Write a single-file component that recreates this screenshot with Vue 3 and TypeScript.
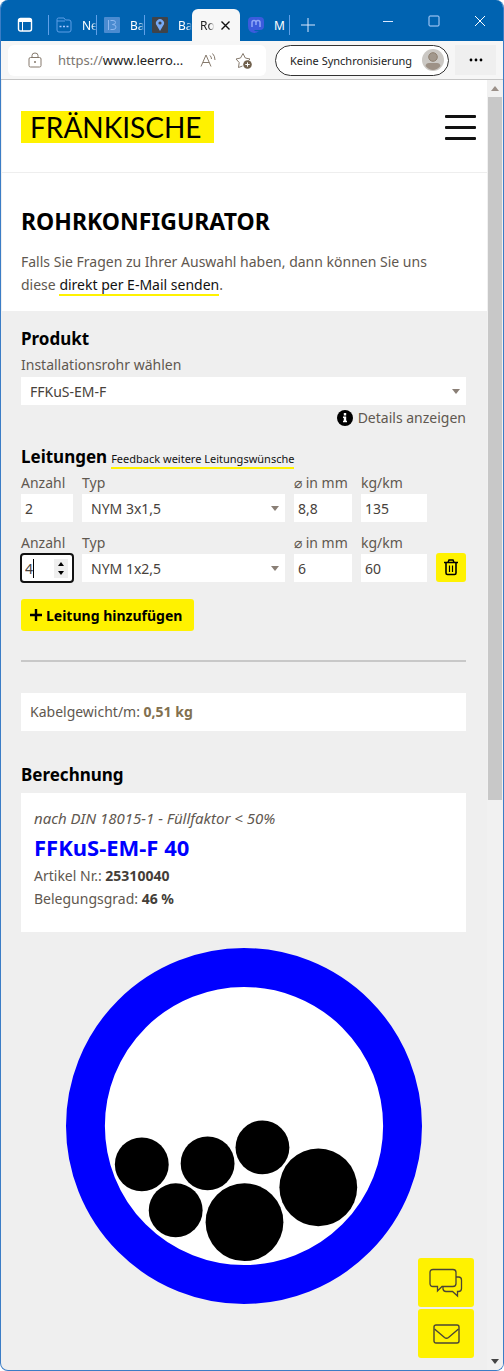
<script setup lang="ts">
import { ref, computed } from 'vue'

interface Cable {
  id: number
  count: number
  type: string
  diameter: string
  weight: string
  active: boolean
}

interface Circle {
  x: number
  y: number
  r: number
}

const product = ref('FFKuS-EM-F')
const products = ['FFKuS-EM-F', 'FFKuS-EM-FF', 'FBY-EL-F']
const cableTypes = ['NYM 3x1,5', 'NYM 1x2,5', 'NYM 5x1,5']

const cables = ref<Cable[]>([
  { id: 1, count: 2, type: 'NYM 3x1,5', diameter: '8,8', weight: '135', active: false },
  { id: 2, count: 4, type: 'NYM 1x2,5', diameter: '6', weight: '60', active: true },
])

const circles: Circle[] = [
  { x: 76, y: 217, r: 27 },
  { x: 142, y: 216, r: 27 },
  { x: 197, y: 200, r: 27 },
  { x: 110, y: 263, r: 27 },
  { x: 179, y: 275, r: 39 },
  { x: 253, y: 240, r: 39 },
]

const totalWeight = computed(() => {
  const grams = cables.value.reduce((sum, c) => sum + c.count * Number(c.weight), 0)
  return (grams / 1000).toFixed(2).replace('.', ',')
})

function addCable() {
  const id = Math.max(0, ...cables.value.map((c) => c.id)) + 1
  cables.value.push({ id, count: 1, type: 'NYM 3x1,5', diameter: '8,8', weight: '135', active: false })
}

function removeCable(id: number) {
  cables.value = cables.value.filter((c) => c.id !== id)
}

function step(cable: Cable, by: number) {
  cable.count = Math.max(0, cable.count + by)
}
</script>

<template>
  <div class="window">
    <header class="titlebar">
      <button class="workspace" aria-label="Tabaktionen">
        <svg width="16" height="16" viewBox="0 0 16 16" fill="none" stroke="#fff">
          <rect x="1.5" y="1.5" width="13" height="12.500" rx="2" stroke-width="1.4" />
          <path d="M1.500 3.500H14.500" stroke-width="3" />
          <path d="M5.500 4V14" />
        </svg>
      </button>
      <nav class="tabs" aria-label="Tabs">
        <button class="tab">
          <svg width="16" height="16" viewBox="0 0 16 16" fill="none" stroke="#5d9fe6">
            <path d="M1 4V2.500Q1 1 2.500 1H8L9.500 3H13Q15 3 15 5V13Q15 15 13 15H3Q1 15 1 13V4H9" />
            <path d="M3.500 9.500H12.500" stroke="#a8c8ff" stroke-width="1.5" stroke-dasharray="2 1.500" />
          </svg>
          <span class="fade">Ne</span>
        </button>
        <button class="tab">
          <svg width="16" height="16" viewBox="0 0 16 16" fill="none">
            <rect width="16" height="16" rx="1" fill="#4a8bd0" />
            <path d="M4.500 3V13M6.500 3.500H9Q11.500 3.500 11.500 5.500T8.500 7.500Q12 7.500 12 10T9 12.500H6.500" stroke="#8db8ef" />
          </svg>
          <span class="fade">Ba</span>
        </button>
        <button class="tab">
          <svg width="16" height="16" viewBox="0 0 16 16">
            <rect width="16" height="16" rx="1" fill="#404348" />
            <path d="M8 14L4.800 8.500A4 4 0 1 1 11.200 8.500Z" fill="#77a9f5" />
            <circle cx="8" cy="6" r="1.600" fill="#404348" />
          </svg>
          <span class="fade">Ba</span>
        </button>
        <button class="tab current" aria-current="page">
          <span class="fade">Ro</span>
          <svg width="9" height="9" viewBox="0 0 9 9" stroke="#111" stroke-width="1.400"><path d="M.5.500L8.500 8.500M8.500.500L.500 8.500" /></svg>
        </button>
        <button class="tab">
          <svg width="16" height="16" viewBox="0 0 16 16" fill="none">
            <path d="M0 4Q0 0 4 0H12Q16 0 16 4V9Q16 13 12 13H6Q7 15 11 14Q9 16 6 16Q0 15 0 9Z" fill="#3b5bdc" />
            <path d="M4 10V5.500Q4 3.500 6 3.500T8 5.500V8V5.500Q8 3.500 10 3.500T12 5.500V10" stroke="#8fa6f7" stroke-width="1.500" />
          </svg>
          <span>M</span>
        </button>
      </nav>
      <button class="new-tab" aria-label="Neuer Tab">
        <svg width="14" height="14" viewBox="0 0 14 14" stroke="#dbe9ff"><path d="M7 0V14M0 7H14" /></svg>
      </button>
      <div class="win-controls">
        <button aria-label="Minimieren">
          <svg width="12" height="12" viewBox="0 0 12 12" stroke="#dbe9ff"><path d="M1 6.500H11" /></svg>
        </button>
        <button aria-label="Maximieren">
          <svg width="12" height="12" viewBox="0 0 12 12" fill="none" stroke="#b9d6ff"><rect x="1" y="1" width="10" height="10" rx="1" /></svg>
        </button>
        <button aria-label="Schließen">
          <svg width="12" height="12" viewBox="0 0 12 12" stroke="#fff"><path d="M1 1L11 11M11 1L1 11" /></svg>
        </button>
      </div>
    </header>

    <div class="toolbar">
      <div class="address">
        <svg class="lock" width="14" height="16" viewBox="0 0 14 16" fill="none" stroke="#85796c">
          <rect x="1" y="5.500" width="12" height="9.500" rx="1.500" />
          <path d="M4 5.500V3.500Q4 1 7 1T10 3.500V5.500" />
          <circle cx="7" cy="10" r="1" fill="#85796c" stroke="none" />
        </svg>
        <span class="url">https://<b>www.leerro...</b></span>
        <button class="read" aria-label="Laut vorlesen">
          <svg width="17" height="15" viewBox="0 0 17 15" fill="none" stroke="#85796c">
            <path d="M1 13.500L6 2L11 13.500M2.800 9.500H9.200" />
            <path d="M10 2.500Q11.500 4 11.500 6M12.500 .500Q15 3 15 7" />
          </svg>
        </button>
        <button class="favorite" aria-label="Zu Favoriten hinzufügen">
          <svg width="17" height="17" viewBox="0 0 17 17" fill="none" stroke="#85796c">
            <path d="M7.500 14L3.500 15.500L4.200 10.500L1 7L5.500 6L8 1.500L10.300 6L15 7L13.500 8.500" />
            <circle cx="12.500" cy="12.500" r="4.300" fill="#71614d" stroke="none" />
            <path d="M12.500 10.300V14.700M10.300 12.500H14.700" stroke="#fff" />
          </svg>
        </button>
      </div>
      <button class="profile">
        <span>Keine Synchronisierung</span>
        <svg width="22" height="22" viewBox="0 0 22 22">
          <circle cx="11" cy="11" r="11" fill="#cbc8c4" />
          <circle cx="11" cy="8" r="4.300" fill="#a2988d" stroke="#8e8071" />
          <path d="M3.500 17Q4 14 7 14H15Q18 14 18.500 17Q15 21 11 21T3.500 17Z" fill="#9d9186" />
        </svg>
      </button>
      <button class="more" aria-label="Einstellungen und mehr">
        <svg width="14" height="4" viewBox="0 0 14 4"><circle cx="2" cy="2" r="1.400" /><circle cx="7" cy="2" r="1.400" /><circle cx="12" cy="2" r="1.400" /></svg>
      </button>
    </div>

    <div class="viewport">
      <div class="page">
        <div class="site-head">
          <a class="logo" href="#">FRÄNKISCHE</a>
          <button class="burger" aria-label="Menü"><i></i><i></i><i></i></button>
        </div>

        <section class="intro">
          <h1>ROHRKONFIGURATOR</h1>
          <p>Falls Sie Fragen zu Ihrer Auswahl haben, dann können Sie uns diese <a href="#">direkt per E-Mail senden</a>.</p>
        </section>

        <main class="config">
          <section>
            <h2>Produkt</h2>
            <label class="label" for="product">Installationsrohr wählen</label>
            <div class="select product">
              <select id="product" v-model="product">
                <option v-for="p in products" :key="p">{{ p }}</option>
              </select>
              <svg width="8" height="5" viewBox="0 0 8 5"><path d="M0 0H8L4 5Z" /></svg>
            </div>
            <button class="details">
              <svg width="16" height="16" viewBox="0 0 16 16">
                <circle cx="8" cy="8" r="8" />
                <path d="M6.800 3H9.200V5.400H6.800ZM6 6.500H9.200V10.800H10V12.300H6V10.800H6.800V8H6Z" fill="#fff" />
              </svg>
              Details anzeigen
            </button>
          </section>

          <section class="cables">
            <div class="cables-head">
              <h2>Leitungen</h2>
              <a href="#">Feedback weitere Leitungswünsche</a>
            </div>
            <div v-for="cable in cables" :key="cable.id" class="cable" :class="{ active: cable.active }">
              <div class="field">
                <label class="label" :for="`count-${cable.id}`">Anzahl</label>
                <div class="count">
                  <input :id="`count-${cable.id}`" v-model.number="cable.count" type="number" min="0" />
                  <template v-if="cable.active">
                    <span class="caret"></span>
                    <span class="spinner">
                      <button aria-label="Mehr" @click="step(cable, 1)"><svg width="6" height="4" viewBox="0 0 6 4"><path d="M0 4H6L3 0Z" /></svg></button>
                      <button aria-label="Weniger" @click="step(cable, -1)"><svg width="6" height="4" viewBox="0 0 6 4"><path d="M0 0H6L3 4Z" /></svg></button>
                    </span>
                  </template>
                </div>
              </div>
              <div class="field">
                <label class="label" :for="`type-${cable.id}`">Typ</label>
                <div class="select">
                  <select :id="`type-${cable.id}`" v-model="cable.type">
                    <option v-for="t in cableTypes" :key="t">{{ t }}</option>
                  </select>
                  <svg width="8" height="5" viewBox="0 0 8 5"><path d="M0 0H8L4 5Z" /></svg>
                </div>
              </div>
              <div class="field">
                <label class="label" :for="`diameter-${cable.id}`">⌀ in mm</label>
                <input :id="`diameter-${cable.id}`" v-model="cable.diameter" type="text" />
              </div>
              <div class="field">
                <label class="label" :for="`weight-${cable.id}`">kg/km</label>
                <input :id="`weight-${cable.id}`" v-model="cable.weight" type="text" />
              </div>
              <button v-if="cable.active" class="trash" aria-label="Leitung entfernen" @click="removeCable(cable.id)">
                <svg width="14" height="17" viewBox="0 0 14 17" fill="none" stroke="#000">
                  <path d="M0 3.500H14" stroke-width="1.500" />
                  <path d="M4 3.500L5 1H9L10 3.500" stroke-width="1.500" />
                  <path d="M2 4V14Q2 15.500 3.500 15.500H10.500Q12 15.500 12 14V4" stroke-width="1.600" />
                  <path d="M5.500 6.500V13M8.500 6.500V13" stroke-width="1.200" />
                </svg>
              </button>
            </div>
            <button class="add" @click="addCable">
              <svg width="12" height="12" viewBox="0 0 12 12" stroke="#000" stroke-width="2.400"><path d="M6 0V12M0 6H12" /></svg>
              Leitung hinzufügen
            </button>
          </section>

          <hr />

          <p class="weight">Kabelgewicht/m: <b>{{ totalWeight }} kg</b></p>

          <section class="result">
            <h2>Berechnung</h2>
            <div class="card">
              <p><em>nach DIN 18015-1 - Füllfaktor &lt; 50%</em></p>
              <h3>{{ product }} 40</h3>
              <p>Artikel Nr.: <b>25310040</b></p>
              <p>Belegungsgrad: <b>46 %</b></p>
            </div>
            <svg class="pipe" viewBox="0 0 357 357" role="img" aria-label="Rohrquerschnitt">
              <circle cx="178.500" cy="178.500" r="159" fill="#fff" stroke="#00f" stroke-width="39" />
              <circle v-for="(c, i) in circles" :key="i" :cx="c.x" :cy="c.y" :r="c.r" />
            </svg>
          </section>
        </main>

        <aside class="contact">
          <button aria-label="Chat">
            <svg width="34" height="30" viewBox="0 0 34 30" fill="none" stroke="#4b4535" stroke-width="1.300">
              <path d="M4 1.500H24Q27 1.500 27 4.500V15.500Q27 18.500 24 18.500H13L8.500 23V18.500H4Q1 18.500 1 15.500V4.500Q1 1.500 4 1.500Z" />
              <path d="M27 9H29.500Q32.500 9 32.500 12V20.500Q32.500 23.500 29.500 23.500H28.500V28L23.500 23.500H17Q14.500 23.500 14 21V18.500" />
            </svg>
          </button>
          <button aria-label="E-Mail">
            <svg width="27" height="20" viewBox="0 0 27 20" fill="none" stroke="#4b4535" stroke-width="1.400">
              <rect x="1" y="1" width="25" height="18" rx="2" />
              <path d="M1.500 5L11.500 13.500Q13.500 15 15.500 13.500L25.500 5" />
            </svg>
          </button>
        </aside>
      </div>

      <div class="scrollbar" aria-hidden="true">
        <svg width="8" height="5" viewBox="0 0 8 5" fill="#9b9089"><path d="M0 5H8L4 0Z" /></svg>
        <div class="track"><div class="thumb"></div></div>
        <svg width="8" height="5" viewBox="0 0 8 5" fill="#444"><path d="M0 0H8L4 5Z" /></svg>
      </div>
    </div>
  </div>
</template>

<style>
body {
  background: #fff;
}
#app {
  font-family: "Noto Sans", "Open Sans", sans-serif;
}
</style>

<style scoped>
* {
  box-sizing: border-box;
}
h1, h2, h3, p {
  margin: 0;
}
button, input, select {
  font: inherit;
  color: inherit;
  border: 0;
  padding: 0;
  margin: 0;
  background: none;
  border-radius: 0;
}
button {
  display: flex;
  align-items: center;
  justify-content: center;
  cursor: pointer;
}
svg {
  display: block;
  flex: none;
}
.window {
  min-height: 100vh;
  display: flex;
  flex-direction: column;
  border: 1px solid #3b7dc6;
  border-top: 0;
  border-radius: 8px;
  overflow: hidden;
  background: #efefef;
  font-size: 14px;
  color: #5f5850;
}
.titlebar {
  height: 41px;
  background: #0063b1;
  display: flex;
  align-items: stretch;
  color: #fff;
}
.workspace {
  width: 47px;
  padding-top: 8px;
}
.tabs {
  display: flex;
  padding-top: 9px;
}
.tab {
  position: relative;
  width: 48px;
  gap: 10px;
  font-size: 12px;
  padding-left: 8px;
  justify-content: flex-start;
}
.tab:not(.current)::before {
  content: "";
  position: absolute;
  left: 0;
  top: 6px;
  height: 20px;
  border-left: 1px solid #5fa0e8;
}
.tab.current + .tab::before {
  left: auto;
  right: 0;
}
.tab:last-child {
  width: 50px;
}
.fade {
  white-space: nowrap;
  -webkit-mask-image: linear-gradient(90deg, #000 60%, transparent 95%);
  mask-image: linear-gradient(90deg, #000 60%, transparent 95%);
}
.tab.current {
  gap: 6px;
  background: #f7f7f7;
  color: #222;
  border-radius: 6px 6px 0 0;
}
.new-tab {
  width: 36px;
  padding-top: 8px;
}
.win-controls {
  display: flex;
  margin-left: auto;
}
.win-controls button {
  width: 46px;
}
.toolbar {
  height: 39px;
  display: flex;
  align-items: center;
  padding: 0 7px;
  background: #f6f6f6;
  border-bottom: 1px solid #c5c5c5;
  color: #222;
}
.address {
  flex: 1;
  height: 31px;
  display: flex;
  align-items: center;
  padding: 0 14px 0 20px;
  background: #fff;
  border-radius: 6px;
}
.url {
  flex: 1;
  margin-left: 16px;
  font-size: 13px;
  color: #7c7670;
  white-space: nowrap;
}
.url b {
  font-weight: 400;
  color: #222;
}
.read {
  margin-right: 18px;
}
.profile {
  height: 31px;
  margin: 0 6px 0 9px;
  padding: 0 4px 0 14px;
  gap: 10px;
  border: 1px solid #333;
  border-radius: 16px;
  background: #fff;
  font-size: 11px;
  white-space: nowrap;
}
.more {
  width: 41px;
  height: 30px;
  background: #efefef;
}
.viewport {
  flex: 1;
  display: flex;
}
.page {
  position: relative;
  flex: 1;
  min-width: 0;
  margin-left: 1px;
}
.site-head {
  height: 93px;
  display: flex;
  align-items: center;
  justify-content: space-between;
  padding: 2px 11px 0 19px;
  background: #fff;
  border-bottom: 1px solid #eee;
}
.logo {
  padding: 0 12px 0 9px;
  background: #fff200;
  color: #000;
  font-family: Lato, sans-serif;
  font-size: 28px;
  line-height: 32px;
  text-decoration: none;
}
.burger {
  width: 31px;
  flex-direction: column;
  gap: 8px;
}
.burger i {
  width: 100%;
  height: 3px;
  border-radius: 1px;
  background: #111;
}
.intro {
  padding: 30px 40px 15px 19px;
  background: #fff;
  line-height: 23px;
}
h1 {
  margin-bottom: 11px;
  font-size: 23px;
  line-height: 36px;
  color: #000;
}
.intro a, .cables-head a {
  color: #111;
  text-decoration: none;
  border-bottom: 2px solid #fff200;
}
.config {
  padding: 15px 21px 60px 19px;
}
h2 {
  margin-bottom: 1px;
  font-size: 17px;
  line-height: 26px;
  color: #000;
}
.label {
  display: block;
  line-height: 23px;
  white-space: nowrap;
}
.select {
  display: grid;
  align-items: center;
}
.select > * {
  grid-area: 1 / 1;
}
.select svg {
  justify-self: end;
  margin-right: 6px;
  fill: #8a7f76;
  pointer-events: none;
}
.product {
  margin-top: 1px;
}
select, input {
  width: 100%;
  height: 28px;
  background: #fff;
  color: #47413b;
}
select {
  appearance: none;
  padding-left: 9px;
}
input {
  padding: 0 4px;
  appearance: textfield;
}
input::-webkit-inner-spin-button {
  display: none;
}
.details {
  margin-left: auto;
  gap: 5px;
  line-height: 25px;
}
.details svg {
  fill: #000;
}
.cables {
  margin-top: 14px;
}
.cables-head {
  display: flex;
  align-items: baseline;
  gap: 4px;
}
.cables-head a {
  font-size: 11px;
  line-height: 17px;
}
.cable {
  display: grid;
  grid-template-columns: 52px minmax(0, 1fr) 58px 66px 30px;
  gap: 9px;
  align-items: end;
  margin-bottom: 9px;
}
.count {
  position: relative;
}
.active .count input {
  outline: 2px solid #111;
  outline-offset: -1px;
  border-radius: 3px;
}
.caret {
  position: absolute;
  left: 12px;
  top: 5px;
  width: 1px;
  height: 19px;
  background: #000;
}
.spinner {
  position: absolute;
  right: 5px;
  top: 5px;
  width: 14px;
  height: 19px;
  display: grid;
  justify-items: center;
  background: #efefef;
}
.trash {
  height: 29px;
  background: #fff200;
  border-radius: 3px;
}
.add {
  margin-top: 17px;
  height: 32px;
  padding: 0 12px 0 9px;
  gap: 4px;
  background: #fff200;
  border-radius: 3px;
  color: #000;
  font-weight: 700;
}
hr {
  margin: 29px 0 31px;
  border: 0;
  border-top: 2px solid #c8c8c8;
}
.weight {
  padding: 0 9px;
  background: #fff;
  line-height: 38px;
}
.weight b {
  color: #82704f;
}
.result {
  margin-top: 31px;
}
.card {
  margin-top: 5px;
  padding: 14px 13px 22px;
  background: #fff;
  line-height: 23px;
}
.card em {
  font-size: 15px;
}
.card b {
  color: #443e38;
}
h3 {
  font-size: 22px;
  line-height: 34px;
  color: #00f;
}
.pipe {
  width: 80%;
  margin: 16px auto 0;
}
.contact {
  position: absolute;
  right: 13px;
  bottom: 12px;
  display: grid;
  gap: 2px;
}
.contact button {
  width: 56px;
  height: 49px;
  background: #fff200;
  border-radius: 3px;
}
.scrollbar {
  width: 16px;
  display: flex;
  flex-direction: column;
  align-items: center;
  gap: 6px;
  padding: 6px 1px;
  background: #f1f1f1;
}
.track {
  flex: 1;
  width: 100%;
}
.thumb {
  height: 56%;
  background: #c8c8c8;
}
</style>
